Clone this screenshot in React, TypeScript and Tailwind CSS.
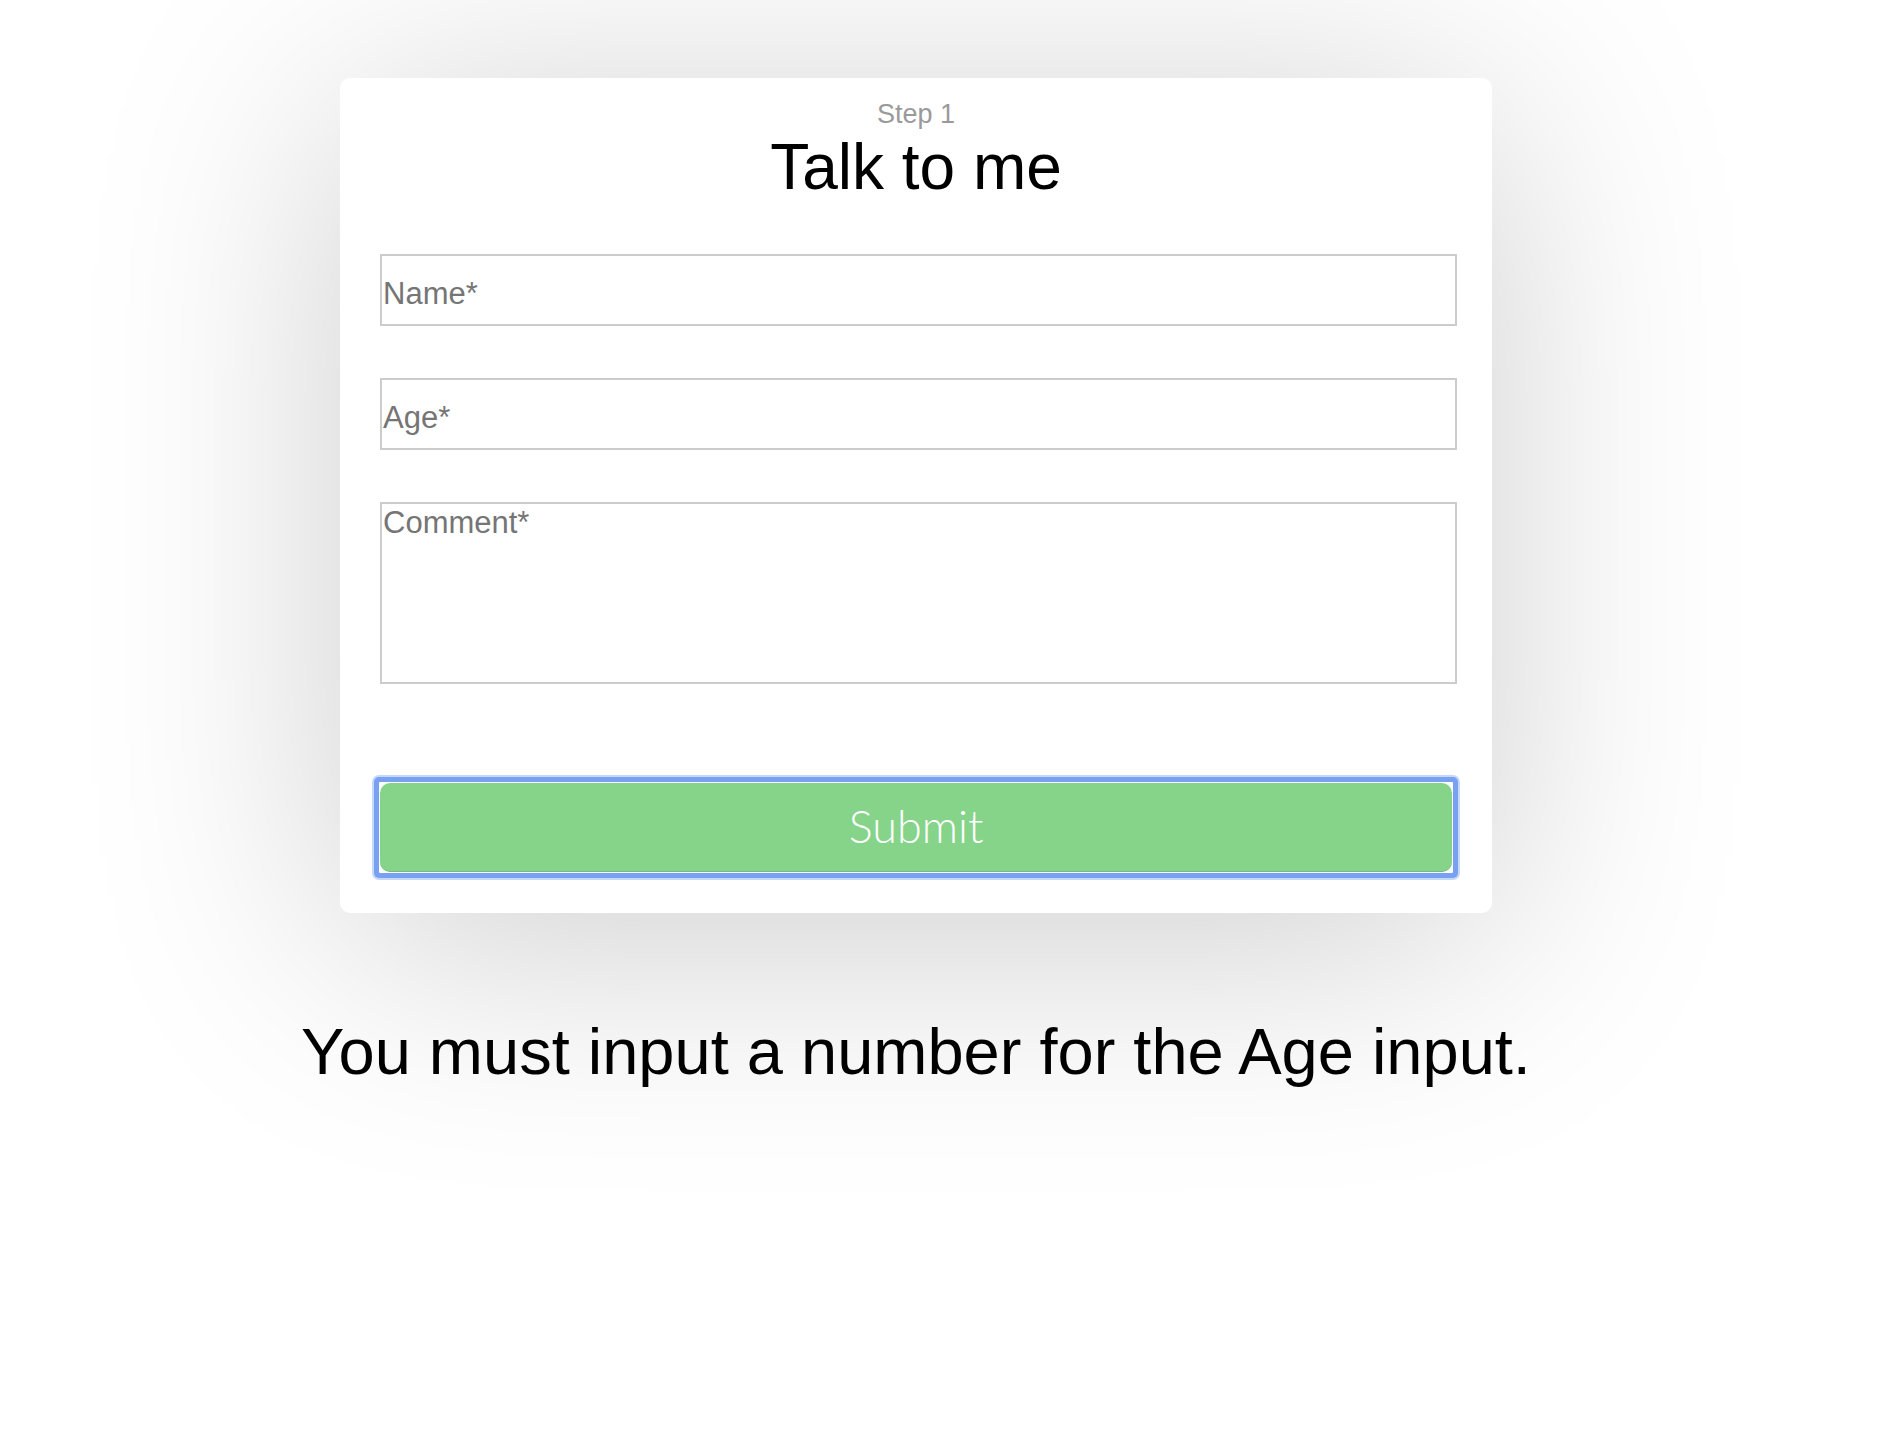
import React from "react";

export default function App() {
  return (
    <div className="min-h-[1438px] w-full bg-white font-['Liberation_Sans',Arial,sans-serif] pt-[78px] pl-[340px] overflow-hidden">
      <div className="w-[1152px]">
        <div className="w-[1152px] rounded-[10px] bg-white px-[40px] pt-[22px] pb-[33px] shadow-[0_30px_300px_rgba(0,0,0,0.2)]">
          <div className="text-center text-[27px] leading-[28px] text-[#9a9a9a]">Step 1</div>
          <h1 className="mt-[4px] text-center text-[64px] leading-[71px] text-black">Talk to me</h1>
          <input
            type="text"
            placeholder="Name*"
            className="mt-[51px] block h-[72px] w-[1077px] border-2 border-[#cccccc] bg-white pl-[1px] pt-[7px] text-[31px] leading-[36px] text-black outline-none placeholder:text-[#757575] font-['Liberation_Sans',Arial,sans-serif]"
          />
          <input
            type="text"
            placeholder="Age*"
            className="mt-[52px] block h-[72px] w-[1077px] border-2 border-[#cccccc] bg-white pl-[1px] pt-[7px] text-[31px] leading-[36px] text-black outline-none placeholder:text-[#757575] font-['Liberation_Sans',Arial,sans-serif]"
          />
          <textarea
            placeholder="Comment*"
            className="mt-[52px] block h-[182px] w-[1077px] resize-none border-2 border-[#cccccc] bg-white pl-[1px] pt-[2px] text-[31px] leading-[34px] text-black outline-none placeholder:text-[#757575] font-['Liberation_Sans',Arial,sans-serif]"
          />
          <div className="mt-[91px] ml-[-8px] w-[1088px] rounded-[7px] bg-[#c6d8f9] p-[2px]">
            <div className="rounded-[5px] bg-[#79a1f1] p-[5px]">
              <div className="rounded-[1px] bg-white p-[1px]">
                <button
                  type="button"
                  className="flex h-[89px] w-full items-center justify-center rounded-[10px] border-b border-[#79b882] bg-[#86d48a] text-[45px] font-light text-white font-['Lato',sans-serif]"
                >
                  Submit
                </button>
              </div>
            </div>
          </div>
        </div>
        <div className="mt-[107px] flex justify-center">
          <p className="shrink-0 whitespace-nowrap text-center text-[65px] leading-[64px] text-black">
            You must input a number for the Age input.
          </p>
        </div>
      </div>
    </div>
  );
}
